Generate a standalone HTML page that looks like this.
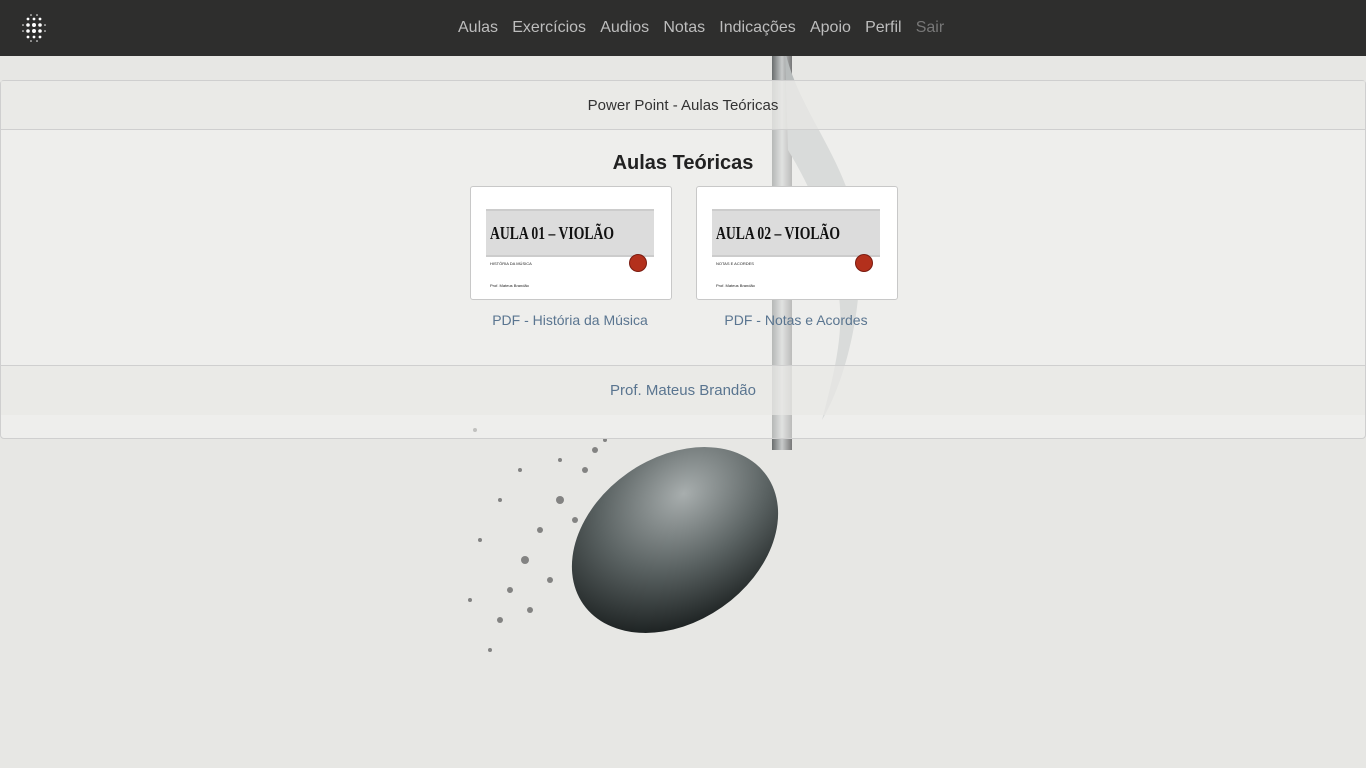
<!DOCTYPE html>
<html><head><meta charset="utf-8"><style>
body{margin:0;width:1366px;height:768px;overflow:hidden;background:#e7e7e4;font-family:"Liberation Sans",sans-serif;position:relative}
.bg{position:absolute;left:0;top:0}
nav{position:absolute;top:0;left:0;width:1366px;height:56px;background:#2e2e2d;z-index:2}
nav .links{position:absolute;left:458px;top:19px;font-size:16px;color:#bdbdbd;white-space:nowrap}
nav .links span{margin-right:14.2px}
.panel{position:absolute;left:0;top:80px;width:1364px;height:357px;border:1px solid #cfcfcf;border-radius:4px;background:rgba(244,244,242,.55);z-index:1}
.hd{height:48px;border-bottom:1px solid #cfcfcf;background:rgba(232,232,230,.7);text-align:center;line-height:50px;font-size:15px;color:#333}
.ft{position:absolute;top:284px;left:0;right:0;height:49px;border-top:1px solid #cfcfcf;background:rgba(232,232,230,.7);text-align:center;line-height:50px;font-size:15px;color:#5a7590}
h3{margin:0;position:absolute;top:71px;width:100%;text-align:center;font-size:20px;font-weight:bold;color:#222}
.card{position:absolute;top:105px;width:200px;height:112px;background:#fff;border:1px solid #c8c8c8;border-radius:3px}
.card .band{position:absolute;left:15px;top:22px;width:168px;height:48px;background:#dcdcdc;border-top:2px solid #ccc;border-bottom:2px solid #ccc;box-sizing:border-box;font-family:"Liberation Serif",serif;font-weight:bold;font-size:18px;line-height:44px;padding-left:4px;color:#111;white-space:nowrap}
.card .band b{display:inline-block;transform:scaleX(0.76);transform-origin:left}
.card .dot{position:absolute;left:158px;top:67px;width:16px;height:16px;border-radius:50%;background:#b3301c;border:1px solid #7a1b10}
.card .sub{position:absolute;left:19px;top:74px;font-size:4px;color:#222}
.card .pr{position:absolute;left:19px;top:96px;font-size:4px;color:#222}
.lbl{position:absolute;top:231px;font-size:14px;color:#5a7590;text-align:center;width:230px}
</style></head><body>
<svg class="bg" width="1366" height="768">
<defs><radialGradient id="g" cx="0.65" cy="0.3" r="0.75"><stop offset="0" stop-color="#a8aeae"/><stop offset="0.55" stop-color="#5a6262"/><stop offset="1" stop-color="#1e2323"/></radialGradient>
<linearGradient id="s" x1="0" x2="1"><stop offset="0" stop-color="#6a6e6e"/><stop offset="0.5" stop-color="#c8cbcb"/><stop offset="1" stop-color="#777"/></linearGradient></defs>
<path d="M772 40 L792 45 L792 450 L772 450 Z" fill="url(#s)"/>
<path d="M785 50 C800 120 860 170 860 260 C860 330 840 390 822 420 C835 370 845 330 838 290 C830 220 800 170 788 150 Z" fill="#b8bcbc"/>
<ellipse cx="675" cy="540" rx="112" ry="82" transform="rotate(-35 675 540)" fill="url(#g)"/>
<g fill="#333" opacity="0.55">
<circle cx="585" cy="470" r="3"/><circle cx="560" cy="500" r="4"/><circle cx="540" cy="530" r="3"/><circle cx="525" cy="560" r="4"/><circle cx="510" cy="590" r="3"/><circle cx="500" cy="620" r="3"/><circle cx="490" cy="650" r="2"/><circle cx="575" cy="520" r="3"/><circle cx="550" cy="580" r="3"/><circle cx="530" cy="610" r="3"/><circle cx="520" cy="470" r="2"/><circle cx="500" cy="500" r="2"/><circle cx="480" cy="540" r="2"/><circle cx="470" cy="600" r="2"/><circle cx="595" cy="450" r="3"/><circle cx="605" cy="440" r="2"/><circle cx="560" cy="460" r="2"/><circle cx="475" cy="430" r="2"/>
</g>
</svg>
<nav>
<svg style="position:absolute;left:20px;top:13px" width="30" height="30"><g fill="#fff">
<circle cx="11" cy="2" r="0.8"/><circle cx="17" cy="2" r="0.8"/>
<circle cx="8" cy="6" r="1.4"/><circle cx="14" cy="6" r="1.4"/><circle cx="20" cy="6" r="1.4"/>
<circle cx="3" cy="12" r="0.8"/><circle cx="8" cy="12" r="1.8"/><circle cx="14" cy="12" r="2"/><circle cx="20" cy="12" r="1.8"/><circle cx="25" cy="12" r="0.8"/>
<circle cx="3" cy="18" r="0.8"/><circle cx="8" cy="18" r="1.8"/><circle cx="14" cy="18" r="2"/><circle cx="20" cy="18" r="1.8"/><circle cx="25" cy="18" r="0.8"/>
<circle cx="8" cy="24" r="1.4"/><circle cx="14" cy="24" r="1.4"/><circle cx="20" cy="24" r="1.4"/>
<circle cx="11" cy="28" r="0.8"/><circle cx="17" cy="28" r="0.8"/></g></svg>
<div class="links"><span>Aulas</span><span>Exercícios</span><span>Audios</span><span>Notas</span><span>Indicações</span><span>Apoio</span><span>Perfil</span><span style="color:#777">Sair</span></div>
</nav>
<div class="panel">
<div class="hd">Power Point - Aulas Teóricas</div>
<h3>Aulas Teóricas</h3>
<div class="card" style="left:469px"><div class="band"><b>AULA 01 – VIOLÃO</b></div><div class="dot"></div><div class="sub">HISTÓRIA DA MÚSICA</div><div class="pr">Prof. Mateus Brandão</div></div>
<div class="card" style="left:695px"><div class="band"><b>AULA 02 – VIOLÃO</b></div><div class="dot"></div><div class="sub">NOTAS E ACORDES</div><div class="pr">Prof. Mateus Brandão</div></div>
<div class="lbl" style="left:454px">PDF - História da Música</div>
<div class="lbl" style="left:680px">PDF - Notas e Acordes</div>
<div class="ft">Prof. Mateus Brandão</div>
</div>
</body></html>
